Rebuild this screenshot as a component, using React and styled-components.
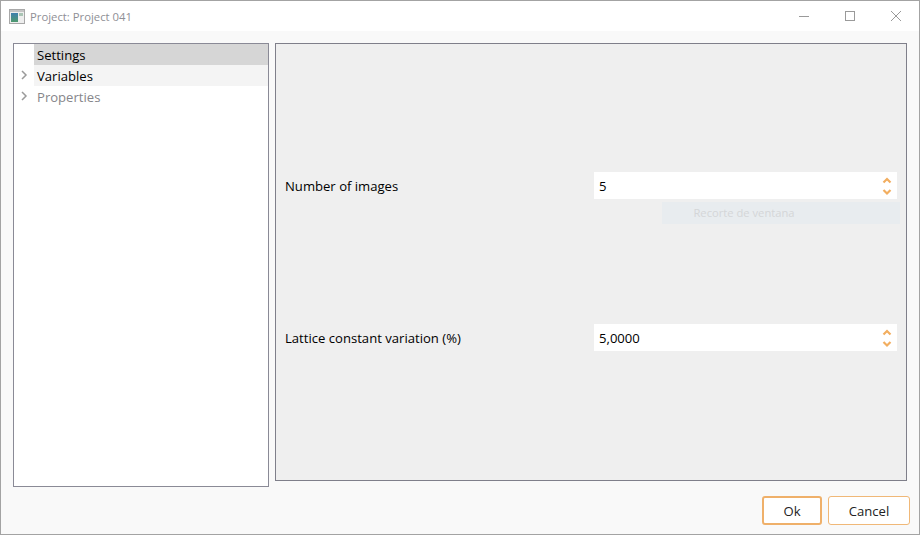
import styled, { createGlobalStyle } from 'styled-components';

const GlobalStyle = createGlobalStyle`
  html, body {
    margin: 0;
    padding: 0;
    background: #f9f9f9;
  }
  * {
    box-sizing: border-box;
  }
`;

const Window = styled.div`
  width: 920px;
  height: 535px;
  display: flex;
  flex-direction: column;
  border: 1px solid #a3a3a3;
  background: #f9f9f9;
  font-family: 'Open Sans', 'Noto Sans', sans-serif;
  font-size: 13.1px;
  color: #000;
  overflow: hidden;
`;

const TitleBar = styled.header`
  height: 30px;
  flex: none;
  display: flex;
  align-items: center;
  background: #fff;
  padding-left: 8px;
`;

const AppIcon = styled.svg`
  width: 16px;
  height: 15px;
  margin-right: 5px;
`;

const Title = styled.span`
  font-size: 11.3px;
  color: #8f8f96;
  flex: 1;
`;

const WindowButton = styled.button`
  width: 46px;
  height: 30px;
  border: 0;
  padding: 0;
  background: none;
  display: flex;
  align-items: center;
  justify-content: center;
  svg {
    width: 12px;
    height: 12px;
    stroke: #9a9a9a;
    stroke-width: 1;
    fill: none;
  }
`;

const Body = styled.main`
  flex: 1;
  min-height: 0;
  display: flex;
  gap: 6px;
  padding: 12px 12px 0 12px;
`;

const TreePanel = styled.nav`
  width: 256px;
  height: 444px;
  flex: none;
  border: 1px solid #8a8a96;
  background: #fff;
  display: flex;
  flex-direction: column;
`;

const TreeRow = styled.div`
  height: 21px;
  display: flex;
  align-items: center;
  padding-left: 5px;
`;

const Expander = styled.svg`
  width: 10px;
  height: 10px;
  margin-right: 5px;
  flex: none;
  margin-top: -2px;
  stroke: #9a9a9a;
  stroke-width: 1.5;
  fill: none;
  visibility: ${({ $hidden }) => ($hidden ? 'hidden' : 'visible')};
`;

const TreeLabel = styled.div`
  flex: 1;
  height: 100%;
  padding-left: 3px;
  line-height: 23px;
  background: ${({ $bg }) => $bg || 'transparent'};
  color: ${({ $muted }) => ($muted ? '#85858a' : '#000')};
`;

const FormPanel = styled.section`
  width: 632px;
  height: 438px;
  flex: none;
  border: 1px solid #7f7f8a;
  background: #efefef;
  padding: 128px 9px 0 9px;
  display: flex;
  flex-direction: column;
`;

const FieldRow = styled.div`
  height: 27px;
  display: flex;
  align-items: center;
  justify-content: space-between;
`;

const FieldLabel = styled.label`
  color: #000;
`;

const Spin = styled.div`
  width: 303px;
  height: 27px;
  background: #fff;
  display: flex;
  align-items: center;
  justify-content: space-between;
  padding: 0 5px;
`;

const SpinArrows = styled.svg`
  width: 10px;
  height: 20px;
  stroke: #f2ae60;
  stroke-width: 2.2;
  fill: none;
`;

const GhostRow = styled.div`
  display: flex;
  justify-content: flex-end;
  margin: 3px -3px 100px 0;
`;

const GhostButton = styled.div`
  width: 238px;
  height: 22px;
  background: #e8ecef;
  color: #d4d6d8;
  font-size: 11.2px;
  line-height: 22px;
  text-align: center;
  padding-right: 74px;
`;

const Footer = styled.footer`
  flex: none;
  height: 53px;
  display: flex;
  justify-content: flex-end;
  align-items: flex-start;
  gap: 6px;
  padding: 15px 9px 0;
`;

const DialogButton = styled.button`
  width: ${({ $wide }) => ($wide ? 82 : 60)}px;
  height: 29px;
  background: #fff;
  border: ${({ $primary }) => ($primary ? '2px solid #efb06a' : '1px solid #f0b878')};
  border-radius: 3px;
  font-family: inherit;
  font-size: 13.1px;
  color: #222;
  padding: 0;
`;

const Arrows = () => (
  <SpinArrows viewBox="0 0 10 20">
    <path d="M1.5 6.5 L5 3 L8.5 6.5" />
    <path d="M1.5 14 L5 17.5 L8.5 14" />
  </SpinArrows>
);

const Chevron = ({ hidden }) => (
  <Expander viewBox="0 0 10 10" $hidden={hidden}>
    <path d="M3 1 L7 5 L3 9" />
  </Expander>
);

export default function App() {
  return (
    <>
      <GlobalStyle />
      <Window>
        <TitleBar>
          <AppIcon viewBox="0 0 16 15">
            <defs>
              <linearGradient id="iconFill" x1="0" y1="0" x2="0" y2="1">
                <stop offset="0" stopColor="#3f7fae" />
                <stop offset="1" stopColor="#4f9a6e" />
              </linearGradient>
            </defs>
            <rect x="0.5" y="0.5" width="15" height="14" fill="#eeeeee" stroke="#a8a8a8" />
            <rect x="1" y="1" width="14" height="2" fill="#c4c4c4" />
            <rect x="2" y="4" width="7" height="9" fill="url(#iconFill)" />
            <rect x="10" y="4" width="4" height="3" fill="#a9c4b4" />
          </AppIcon>
          <Title>Project: Project 041</Title>
          <WindowButton aria-label="Minimize">
            <svg viewBox="0 0 12 12"><path d="M1 6.5 H11" /></svg>
          </WindowButton>
          <WindowButton aria-label="Maximize">
            <svg viewBox="0 0 12 12"><rect x="1.5" y="1.5" width="9" height="9" /></svg>
          </WindowButton>
          <WindowButton aria-label="Close">
            <svg viewBox="0 0 12 12"><path d="M1 1 L11 11 M11 1 L1 11" /></svg>
          </WindowButton>
        </TitleBar>
        <Body>
          <TreePanel>
            <TreeRow>
              <Chevron hidden />
              <TreeLabel $bg="#d6d6d6">Settings</TreeLabel>
            </TreeRow>
            <TreeRow>
              <Chevron />
              <TreeLabel $bg="#f4f4f4">Variables</TreeLabel>
            </TreeRow>
            <TreeRow>
              <Chevron />
              <TreeLabel $muted>Properties</TreeLabel>
            </TreeRow>
          </TreePanel>
          <FormPanel>
            <FieldRow>
              <FieldLabel>Number of images</FieldLabel>
              <Spin>
                5
                <Arrows />
              </Spin>
            </FieldRow>
            <GhostRow>
              <GhostButton>Recorte de ventana</GhostButton>
            </GhostRow>
            <FieldRow>
              <FieldLabel>Lattice constant variation (%)</FieldLabel>
              <Spin>
                5,0000
                <Arrows />
              </Spin>
            </FieldRow>
          </FormPanel>
        </Body>
        <Footer>
          <DialogButton $primary>Ok</DialogButton>
          <DialogButton $wide>Cancel</DialogButton>
        </Footer>
      </Window>
    </>
  );
}
